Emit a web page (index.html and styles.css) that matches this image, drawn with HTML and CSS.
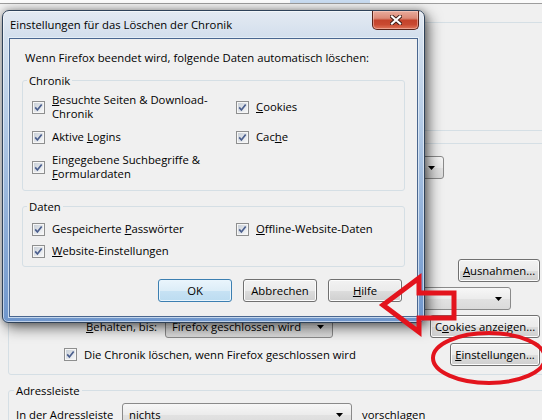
FILE: index.html
```html
<!DOCTYPE html>
<html lang="de">
<head>
<meta charset="utf-8">
<title>Einstellungen für das Löschen der Chronik</title>
<link rel="stylesheet" href="styles.css">
</head>
<body>
<svg class="defs" width="0" height="0" aria-hidden="true">
  <defs>
    <linearGradient id="cbg" x1="0" y1="0" x2="1" y2="1">
      <stop offset="0" stop-color="#c9d0d8"/>
      <stop offset="1" stop-color="#f6f7f8"/>
    </linearGradient>
    <symbol id="chk" viewBox="0 0 13 13">
      <rect x="0.5" y="0.5" width="12" height="12" fill="#f6f6f6" stroke="#8e8f8f"/>
      <rect x="2" y="2" width="9" height="9" fill="url(#cbg)"/>
      <path d="M3.2 6.4 L5.4 9 L9.7 3.4" fill="none" stroke="#4b5f8e" stroke-width="1.7"/>
    </symbol>
    <symbol id="dn" viewBox="0 0 7 4">
      <path d="M0 0H7L3.5 4Z" fill="#000"/>
    </symbol>
  </defs>
</svg>

<div class="page">
  <div class="toolbar"><span class="tabsel"></span></div>
  <div class="pane">
    <div class="pg pg-track"></div>

    <div class="pg pg-hist">
      <div class="prows">
        <div class="prow r-mode">
          <span class="dd dd-fill"><svg class="dn"><use href="#dn"/></svg></span>
        </div>
        <div class="hidden-rows"></div>
        <div class="prow">
          <span class="btn btn-exc"><u>A</u>usnahmen...</span>
        </div>
        <div class="prow">
          <span class="dd dd-third"><svg class="dn"><use href="#dn"/></svg></span>
        </div>
        <div class="prow ind3">
          <span class="lbl-keep"><u>B</u>ehalten, bis:</span>
          <span class="dd dd-keep"><span>Firefox geschlossen wird</span><svg class="dn"><use href="#dn"/></svg></span>
          <span class="btn btn-cookies">C<u>o</u>okies anzeigen...</span>
        </div>
        <div class="prow ind2">
          <svg class="cb"><use href="#chk"/></svg><span>Die Chronik löschen, wenn Firefox <u>g</u>eschlossen wird</span>
          <span class="btn btn-settings"><u>E</u>instellungen...</span>
        </div>
      </div>
    </div>

    <fieldset class="pg pg-addr">
      <legend>Adressleiste</legend>
      <div class="prow">
        <span class="lbl-addr">In der Adressleiste</span>
        <span class="dd dd-addr"><span>nichts</span><svg class="dn"><use href="#dn"/></svg></span>
        <span>vorschlagen</span>
      </div>
    </fieldset>
  </div>
</div>

<div class="dialog">
  <div class="titlebar">
    <span class="title">Einstellungen für das Löschen der Chronik</span>
    <span class="close">
      <svg width="12" height="10" viewBox="0 0 12 10">
        <path d="M2 1.5 L10 8.5 M10 1.5 L2 8.5" stroke="#3b1a14" stroke-width="4" stroke-linecap="square"/>
        <path d="M2 1.5 L10 8.5 M10 1.5 L2 8.5" stroke="#ffffff" stroke-width="2.2" stroke-linecap="square"/>
      </svg>
    </span>
  </div>
  <div class="client">
    <p class="intro">Wenn Firefox beendet wird, folgende Daten automatisch löschen:</p>
    <fieldset class="grp">
      <legend>Chronik</legend>
      <div class="cbgrid">
        <label class="cbx"><svg class="cb"><use href="#chk"/></svg><span><u>B</u>esuchte Seiten &amp; Download-<br>Chronik</span></label>
        <label class="cbx"><svg class="cb"><use href="#chk"/></svg><span><u>C</u>ookies</span></label>
        <label class="cbx"><svg class="cb"><use href="#chk"/></svg><span>Aktive <u>L</u>ogins</span></label>
        <label class="cbx"><svg class="cb"><use href="#chk"/></svg><span>Cac<u>h</u>e</span></label>
        <label class="cbx"><svg class="cb"><use href="#chk"/></svg><span>Eingegebene Suchbegriffe &amp;<br><u>F</u>ormulardaten</span></label>
      </div>
    </fieldset>
    <fieldset class="grp grp-data">
      <legend>Daten</legend>
      <div class="cbgrid">
        <label class="cbx"><svg class="cb"><use href="#chk"/></svg><span>Gespeicherte <u>P</u>asswörter</span></label>
        <label class="cbx"><svg class="cb"><use href="#chk"/></svg><span><u>O</u>ffline-Website-Daten</span></label>
        <label class="cbx"><svg class="cb"><use href="#chk"/></svg><span><u>W</u>ebsite-Einstellungen</span></label>
      </div>
    </fieldset>
    <div class="btns">
      <span class="btn btn-def">OK</span>
      <span class="btn">Abbrechen</span>
      <span class="btn"><u>H</u>ilfe</span>
    </div>
  </div>
</div>

<svg class="annot" width="542" height="420" viewBox="0 0 542 420" aria-hidden="true">
  <polygon points="383,305 419,278 419,293 454,293 454,318 419,318 419,332" fill="none" stroke="#e3141d" stroke-width="5" stroke-linejoin="miter"/>
  <ellipse cx="489" cy="358" rx="56" ry="25" fill="none" stroke="#e3141d" stroke-width="4"/>
</svg>
</body>
</html>
```

FILE: styles.css
```css
* { box-sizing: border-box; }

html, body {
  margin: 0;
  padding: 0;
}

body {
  width: 542px;
  height: 420px;
  overflow: hidden;
  position: relative;
  background: #f0f0f0;
  font-family: "Open Sans", "Noto Sans", sans-serif;
  font-size: 11.3px;
  line-height: 14px;
  color: #000;
}

u {
  text-decoration: underline;
  text-underline-offset: 1px;
  text-decoration-thickness: 1px;
}

.defs {
  position: absolute;
  width: 0;
  height: 0;
}

.cb {
  width: 13px;
  height: 13px;
  flex: none;
}

.dn {
  width: 7px;
  height: 4px;
  flex: none;
}

/* ---------- background options page ---------- */

.page {
  width: 542px;
  height: 420px;
  overflow: hidden;
}

.toolbar {
  height: 4px;
  display: flex;
  background: #fbfbfb;
  border-bottom: 1px solid #9d9d9d;
}

.tabsel {
  margin-left: 290px;
  width: 80px;
  background: #c8dbf0;
}

.pane {
  display: flex;
  flex-direction: column;
  padding-left: 8px;
}

.pg {
  width: 546px;
  margin: 0;
  border: 1px solid #d5dfe5;
  border-radius: 3px;
  padding: 0 13px 8px 8px;
  min-width: 0;
}

.pg legend {
  padding: 0 2px;
  margin-left: -3px;
  line-height: 15px;
}

.pg-track {
  margin-top: 18px;
  height: 109px;
}

.pg-hist {
  margin-top: 12px;
  padding-top: 12px;
}

.prows {
  display: flex;
  flex-direction: column;
  gap: 5px;
}

.prow {
  display: flex;
  align-items: center;
  height: 23px;
  white-space: nowrap;
}

.hidden-rows {
  height: 70px;
}

.ind2 { margin-left: 47px; gap: 7px; }
.ind3 { margin-left: 69px; }

.r-mode {
  margin-right: 96px;
  padding-left: 150px;
}

.dd {
  height: 23px;
  display: flex;
  align-items: center;
  justify-content: space-between;
  gap: 6px;
  padding: 0 8px 0 6px;
  border: 1px solid #8a8a8a;
  border-radius: 3px;
  background: linear-gradient(#f7f7f7, #ececec 50%, #e2e2e2 51%, #dadada);
  overflow: hidden;
}

.dd-fill { flex: 1; justify-content: flex-end; }
.dd-third { width: 150px; margin-left: auto; margin-right: 29px; justify-content: flex-end; }
.lbl-keep { width: 79px; }
.dd-keep { width: 168px; }

.btn {
  display: inline-flex;
  align-items: center;
  justify-content: center;
  height: 23px;
  padding: 0 6px;
  border: 1px solid #707070;
  border-radius: 3px;
  background: linear-gradient(#f2f2f2, #ebebeb 50%, #dddddd 51%, #cfcfcf);
  box-shadow: inset 0 0 0 1px #fcfcfc;
  white-space: nowrap;
}

.btn-exc { margin-left: auto; width: 82px; }
.btn-cookies { margin-left: auto; width: 110px; }
.btn-settings { margin-left: auto; width: 90px; }

.pg-addr {
  margin-top: 8px;
  padding: 5px 13px 8px 7px;
}

.pg-addr legend {
  margin-left: -2px;
}

.lbl-addr { width: 106px; }
.dd-addr { width: 230px; margin-right: 10px; }

/* ---------- dialog window ---------- */

.dialog {
  position: absolute;
  left: 2px;
  top: 10px;
  width: 423px;
  display: flex;
  flex-direction: column;
  border: 1px solid #2f4259;
  border-radius: 7px 7px 6px 6px;
  background: linear-gradient(180deg, #e4eaf2 0px, #d3dfed 26px, #b4cbe6 110px, #85a7d4 240px, #6f96cc 313px);
  box-shadow: 4px 5px 14px rgba(0, 0, 0, 0.55), 0 0 7px rgba(0, 0, 0, 0.3), inset 0 0 0 1px rgba(255, 255, 255, 0.55);
}

.titlebar {
  height: 27px;
  display: flex;
  align-items: flex-start;
  justify-content: space-between;
  padding-left: 7px;
}

.title {
  line-height: 15px;
  margin-top: 6px;
  color: #000;
}

.close {
  width: 47px;
  height: 19px;
  margin-right: 5px;
  display: flex;
  align-items: center;
  justify-content: center;
  border: 1px solid #5a2318;
  border-top: none;
  border-radius: 0 0 5px 5px;
  background: linear-gradient(180deg, #e9ab9c 0%, #dc8a77 40%, #c4432b 52%, #c94a31 75%, #e0755a 100%);
  box-shadow: inset 0 0 0 1px rgba(255, 220, 210, 0.45);
}

.client {
  margin: 0 6px 5px;
  background: #f0f0f0;
  border: 1px solid #4a6790;
  box-shadow: 0 0 0 1px rgba(235, 243, 251, 0.7);
  padding: 0 12px 14px;
}

.intro {
  margin: 11px 0 8px 3px;
  line-height: 15px;
}

.grp {
  margin: 0;
  min-width: 0;
  padding: 5px 9px 9px;
  border: 1px solid #d5dfe5;
  border-radius: 3px;
}

.grp legend {
  padding: 0 2px;
  margin-left: -5px;
  line-height: 15px;
}

.grp-data {
  margin-top: 8px;
  padding: 8px 9px 8px;
}

.cbgrid {
  display: grid;
  grid-template-columns: 204px 1fr;
  row-gap: 9px;
  align-items: center;
}

.grp-data .cbgrid {
  row-gap: 8px;
}

.cbx {
  display: flex;
  align-items: center;
  gap: 7px;
  line-height: 14px;
}

.btns {
  margin-top: 12px;
  display: flex;
  justify-content: flex-end;
  gap: 11px;
  padding-right: 3px;
}

.btns .btn {
  width: 74px;
}

.btn-def {
  border-color: #3c7fb1;
  background: linear-gradient(#eaf5fc, #dcedf8 50%, #c7e2f4 51%, #bcdcf1);
  box-shadow: inset 0 0 0 1px #e9f5fd;
}

/* ---------- annotations ---------- */

.annot {
  position: absolute;
  left: 0;
  top: 0;
  pointer-events: none;
}
```
